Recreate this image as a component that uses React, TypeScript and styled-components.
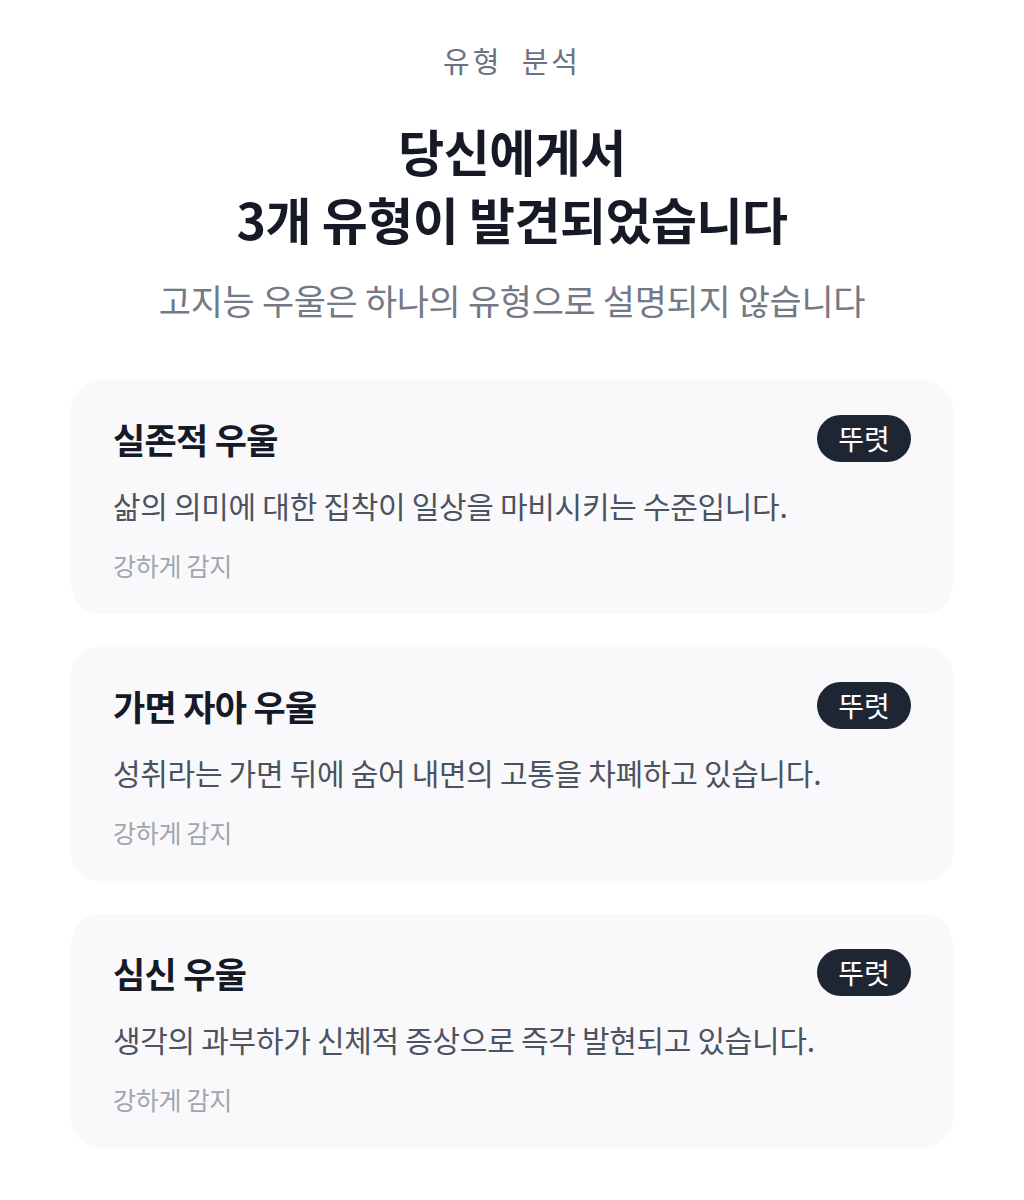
import React from "react";
import styled, { createGlobalStyle } from "styled-components";

const GlobalStyle = createGlobalStyle`
  html, body {
    margin: 0;
    padding: 0;
    background: #ffffff;
  }
  body {
    font-family: "Noto Sans CJK KR", "Noto Sans", sans-serif;
    -webkit-font-smoothing: antialiased;
  }
`;

interface TypeItem {
  title: string;
  level: string;
  description: string;
  detection: string;
}

const types: TypeItem[] = [
  {
    title: "실존적 우울",
    level: "뚜렷",
    description: "삶의 의미에 대한 집착이 일상을 마비시키는 수준입니다.",
    detection: "강하게 감지",
  },
  {
    title: "가면 자아 우울",
    level: "뚜렷",
    description: "성취라는 가면 뒤에 숨어 내면의 고통을 차폐하고 있습니다.",
    detection: "강하게 감지",
  },
  {
    title: "심신 우울",
    level: "뚜렷",
    description: "생각의 과부하가 신체적 증상으로 즉각 발현되고 있습니다.",
    detection: "강하게 감지",
  },
];

const Page = styled.main`
  box-sizing: border-box;
  width: 1024px;
  padding: 40px 71px 40px;
  display: flex;
  flex-direction: column;
  align-items: center;
`;

const Eyebrow = styled.p`
  margin: 0;
  font-size: 29px;
  line-height: 40px;
  color: #6b7280;
  letter-spacing: 0.1em;
  word-spacing: 0.35em;
`;

const Heading = styled.h1`
  margin: 36px 0 0;
  font-size: 50px;
  line-height: 68px;
  font-weight: 700;
  color: #151a26;
  text-align: center;
  letter-spacing: -0.01em;
`;

const Subtitle = styled.p`
  margin: 26px 0 0;
  font-size: 35px;
  line-height: 44px;
  color: #737985;
  letter-spacing: -0.01em;
`;

const CardList = styled.section`
  margin-top: 58px;
  width: 100%;
  display: flex;
  flex-direction: column;
  gap: 33px;
`;

const Card = styled.article`
  background: #f9f9fb;
  border-radius: 30px;
  padding: 35px 42px 32px;
  display: flex;
  flex-direction: column;
`;

const CardHeader = styled.div`
  display: flex;
  align-items: center;
  justify-content: space-between;
  height: 47px;
`;

const CardTitle = styled.h2`
  margin: 0;
  font-size: 35px;
  line-height: 47px;
  font-weight: 700;
  color: #151a26;
  letter-spacing: -0.02em;
`;

const Badge = styled.span`
  box-sizing: border-box;
  width: 94px;
  height: 47px;
  border-radius: 24px;
  background: #1f2633;
  color: #ffffff;
  font-size: 28px;
  line-height: 47px;
  font-weight: 400;
  text-align: center;
`;

const Description = styled.p`
  margin: 23px 0 0;
  font-size: 30px;
  line-height: 40px;
  color: #4b5260;
  letter-spacing: -0.01em;
`;

const Detection = styled.span`
  margin-top: 23px;
  font-size: 25px;
  line-height: 34px;
  color: #a0a5ae;
  letter-spacing: -0.01em;
`;

export default function App() {
  return (
    <>
      <GlobalStyle />
      <Page>
        <Eyebrow>유형 분석</Eyebrow>
        <Heading>
          당신에게서
          <br />
          3개 유형이 발견되었습니다
        </Heading>
        <Subtitle>고지능 우울은 하나의 유형으로 설명되지 않습니다</Subtitle>
        <CardList>
          {types.map((t) => (
            <Card key={t.title}>
              <CardHeader>
                <CardTitle>{t.title}</CardTitle>
                <Badge>{t.level}</Badge>
              </CardHeader>
              <Description>{t.description}</Description>
              <Detection>{t.detection}</Detection>
            </Card>
          ))}
        </CardList>
      </Page>
    </>
  );
}
